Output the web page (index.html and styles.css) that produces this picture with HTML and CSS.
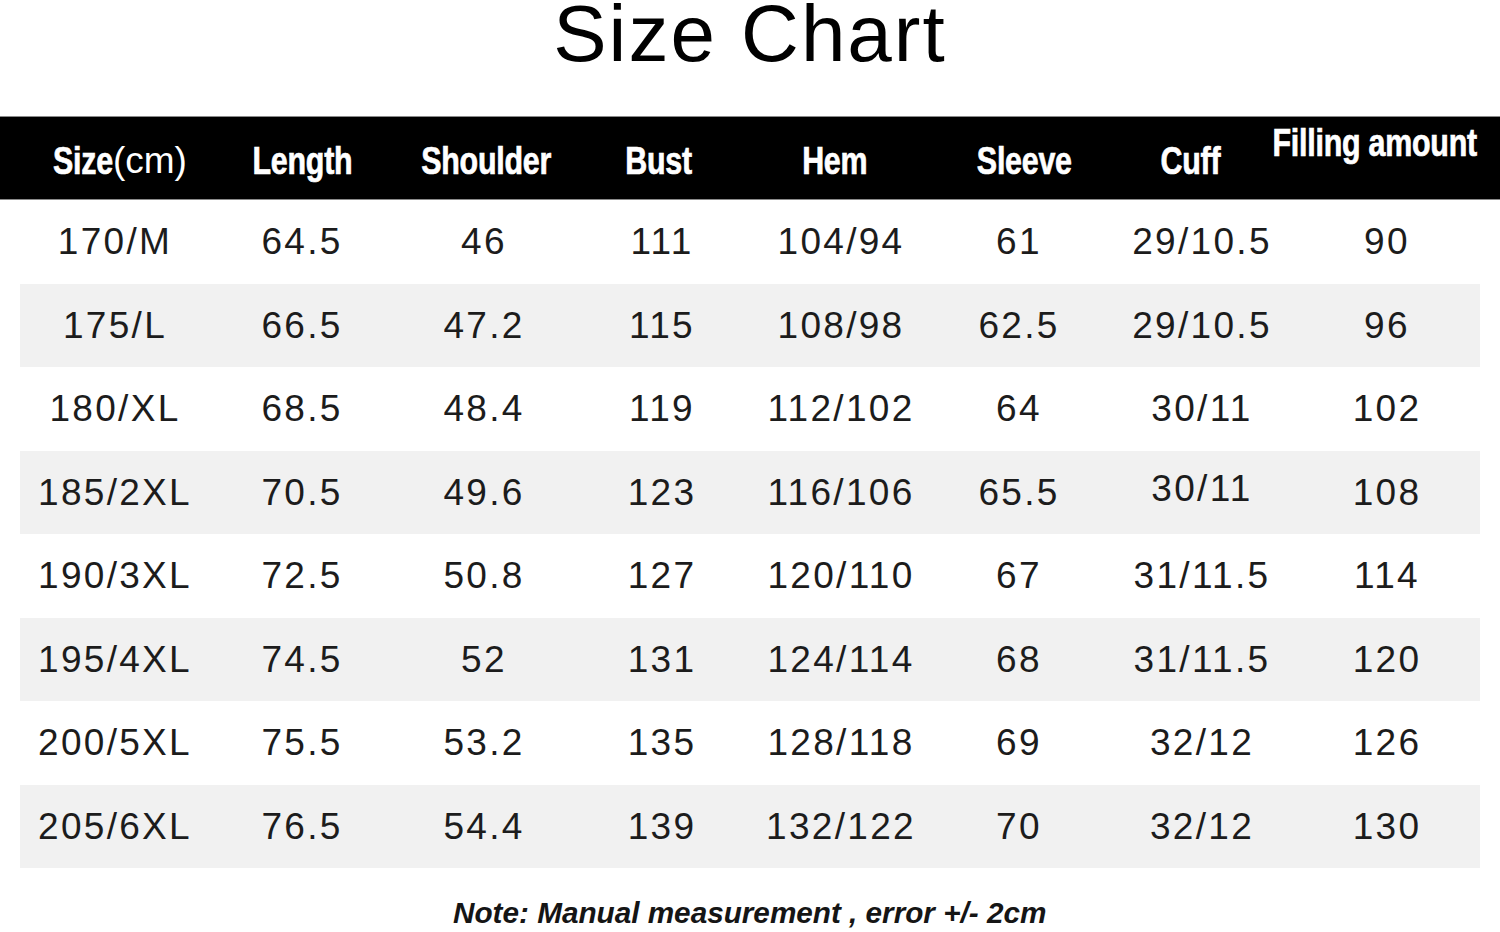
FILE: index.html
```html
<!DOCTYPE html>
<html>
<head>
<meta charset="utf-8">
<link rel="stylesheet" href="styles.css">
</head>
<body>
<div class="page">
  <h1 class="title">Size Chart</h1>
  <div class="head">
    <div class="hc"><span class="hl hsize">Size</span><span class="cm">(cm)</span></div>
    <div class="hc"><span class="hl">Length</span></div>
    <div class="hc"><span class="hl">Shoulder</span></div>
    <div class="hc"><span class="hl">Bust</span></div>
    <div class="hc"><span class="hl">Hem</span></div>
    <div class="hc"><span class="hl">Sleeve</span></div>
    <div class="hc"><span class="hl">Cuff</span></div>
    <div class="hc hc-top"><span class="hl">Filling amount</span></div>
  </div>
  <div class="rows">
    <div class="row"><span>170/M</span><span>64.5</span><span>46</span><span>111</span><span>104/94</span><span>61</span><span>29/10.5</span><span>90</span></div>
    <div class="row alt"><span>175/L</span><span>66.5</span><span>47.2</span><span>115</span><span>108/98</span><span>62.5</span><span>29/10.5</span><span>96</span></div>
    <div class="row"><span>180/XL</span><span>68.5</span><span>48.4</span><span>119</span><span>112/102</span><span>64</span><span>30/11</span><span>102</span></div>
    <div class="row alt"><span>185/2XL</span><span>70.5</span><span>49.6</span><span>123</span><span>116/106</span><span>65.5</span><span class="up">30/11</span><span>108</span></div>
    <div class="row"><span>190/3XL</span><span>72.5</span><span>50.8</span><span>127</span><span>120/110</span><span>67</span><span>31/11.5</span><span>114</span></div>
    <div class="row alt"><span>195/4XL</span><span>74.5</span><span>52</span><span>131</span><span>124/114</span><span>68</span><span>31/11.5</span><span>120</span></div>
    <div class="row"><span>200/5XL</span><span>75.5</span><span>53.2</span><span>135</span><span>128/118</span><span>69</span><span>32/12</span><span>126</span></div>
    <div class="row alt"><span>205/6XL</span><span>76.5</span><span>54.4</span><span>139</span><span>132/122</span><span>70</span><span>32/12</span><span>130</span></div>
  </div>
  <p class="note"><span class="note-in">Note: Manual measurement , error +/- 2cm</span></p>
</div>
</body>
</html>
```
FILE: styles.css
```css
html, body {
  margin: 0;
  padding: 0;
  background: #ffffff;
}

.page {
  width: 1500px;
  height: 932px;
  overflow: hidden;
  font-family: "Liberation Sans", Arial, sans-serif;
}

.title {
  margin: 0;
  height: 116px;
  font-size: 80px;
  line-height: 67px;
  font-weight: normal;
  letter-spacing: 2px;
  text-align: center;
  color: #000;
}

.head {
  display: grid;
  grid-template-columns: 240px 124px 244px 102px 250px 128px 204px 166px 1fr;
  height: 82px;
  background: #000;
  border-top: 1px solid #8a8a8a;
  border-bottom: 1px solid #8a8a8a;
  color: #fff;
}

.hc {
  display: flex;
  justify-content: center;
  align-items: flex-start;
  padding-top: 25px;
  white-space: nowrap;
  font-size: 38px;
  line-height: 38px;
}

.hc-top {
  padding-top: 7px;
}

.hl {
  display: inline-block;
  font-weight: bold;
  transform: scaleX(0.8);
  letter-spacing: -0.3px;
  -webkit-text-stroke: 0.7px #fff;
}

.hsize {
  transform-origin: left center;
  margin-right: -15px;
}

.cm {
  display: inline-block;
  font-weight: normal;
  font-size: 37px;
}

.rows {
  display: flex;
  flex-direction: column;
}

.row {
  display: grid;
  grid-template-columns: 210px 144px 220px 136px 222px 134px 232px 138px 1fr;
  margin: 0 20px;
  height: 83.5px;
  line-height: 83.5px;
  font-size: 37px;
  letter-spacing: 2.3px;
  color: #1c1c1c;
  text-align: center;
  white-space: nowrap;
}

.row > span:first-child {
  margin-left: -20px;
}

.row.alt {
  background: #f1f1f1;
}

.up {
  position: relative;
  top: -4px;
}

.note {
  margin: 0;
  padding-top: 28px;
  text-align: center;
  font-size: 30px;
  line-height: 34px;
  color: #151515;
}

.note-in {
  display: inline-block;
  font-style: italic;
  font-weight: bold;
  transform: scaleX(0.99);
}
```
